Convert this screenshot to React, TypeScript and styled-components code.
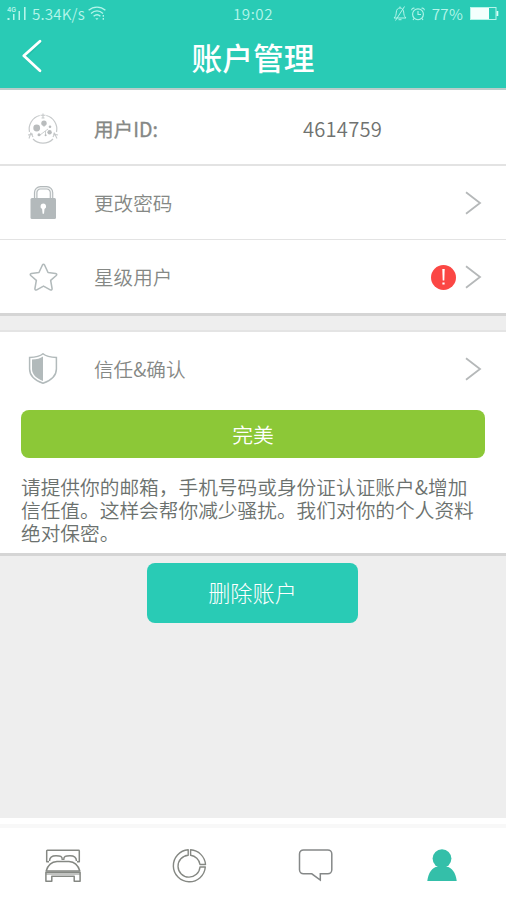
import React from 'react';
import styled, { createGlobalStyle } from 'styled-components';

const GlobalStyle = createGlobalStyle`
  * { box-sizing: border-box; }
  body {
    margin: 0;
    background: #eeeeee;
    font-family: "Noto Sans CJK SC", "Noto Sans", sans-serif;
  }
  svg { display: block; flex: none; }
`;

const Screen = styled.div`
  width: 506px;
  height: 900px;
  display: flex;
  flex-direction: column;
  overflow: hidden;
  background: #eeeeee;
`;

const Header = styled.header`
  height: 90px;
  flex: none;
  background: #29cbb5;
  border-bottom: 2px solid #b9cdca;
`;

const StatusBar = styled.div`
  height: 27px;
  display: grid;
  grid-template-columns: 1fr auto 1fr;
  align-items: center;
  padding: 0 7px;
  color: #b5f5ea;
  font-size: 15.2px;
  line-height: 24px;
  font-weight: 350;
`;

const StatusGroup = styled.div<{ $end?: boolean }>`
  display: flex;
  align-items: center;
  justify-content: ${(p) => (p.$end ? 'flex-end' : 'flex-start')};
`;

const StatusText = styled.span<{ $spacing: number; $left?: number; $right?: number }>`
  letter-spacing: ${(p) => p.$spacing}px;
  margin-left: ${(p) => p.$left ?? 0}px;
  margin-right: ${(p) => p.$right ?? 0}px;
  padding-bottom: 2px;
  white-space: nowrap;
`;

const TitleBar = styled.div`
  height: 61px;
  display: grid;
  grid-template-columns: 62px 1fr 62px;
  align-items: center;
`;

const BackButton = styled.button`
  border: 0;
  background: none;
  padding: 0 0 3px 20px;
  height: 61px;
  display: flex;
  align-items: center;
`;

const Title = styled.h1`
  margin: 0;
  text-align: center;
  color: #ffffff;
  font-size: 30.7px;
  line-height: 59px;
  padding-bottom: 2px;
  font-weight: 500;
`;

const Card = styled.section`
  flex: none;
  background: #ffffff;
  border-bottom: 3px solid #d5d5d5;
`;

const TrustCard = styled(Card)`
  height: 226px;
  margin-top: 14px;
  border-top: 2px solid #e4e4e4;
`;

const Row = styled.div<{ $height: number; $line?: number; $drop?: number }>`
  height: ${(p) => p.$height}px;
  display: flex;
  align-items: center;
  padding: ${(p) => p.$drop ?? 0}px 24px 0 27px;
  border-bottom: ${(p) => p.$line ?? 0}px solid #e3e3e3;
`;

const IconSlot = styled.div`
  width: 32px;
  margin-right: 35px;
  display: flex;
  justify-content: center;
`;

const Label = styled.span<{ $strong?: boolean }>`
  flex: 1;
  color: #858885;
  font-size: 19.6px;
  line-height: 28px;
  font-weight: ${(p) => (p.$strong ? 400 : 350)};
  -webkit-text-stroke: ${(p) => (p.$strong ? '0.3px #858885' : '0')};
`;

const UserId = styled.span`
  width: 179px;
  color: #6f7270;
  font-size: 20.2px;
  line-height: 28px;
  letter-spacing: 0.2px;
  font-weight: 350;
`;

const Alert = styled.span`
  width: 25px;
  height: 25px;
  border-radius: 50%;
  background: #fb4744;
  margin-right: 9px;
  display: flex;
  align-items: center;
  justify-content: center;
`;

const StatusButton = styled.button`
  display: block;
  width: 464px;
  height: 48px;
  margin: 4px 0 0 21px;
  padding: 0 0 1px;
  border: 0;
  border-radius: 8px;
  background: #8cc837;
  color: #ffffff;
  font: 350 20.8px/46px "Noto Sans CJK SC", sans-serif;
`;

const Notice = styled.p`
  margin: 17px 21px 0;
  color: #6b716e;
  font-size: 19.7px;
  line-height: 23px;
  font-weight: 350;
  white-space: nowrap;
`;

const Body = styled.main`
  flex: 1;
  display: flex;
  justify-content: center;
  align-items: flex-start;
  padding-top: 7px;
`;

const DeleteButton = styled.button`
  width: 211px;
  height: 60px;
  margin-right: 1px;
  padding: 0 0 2px;
  border: 0;
  border-radius: 8px;
  background: #29cbb5;
  color: #ffffff;
  font: 300 22.2px/58px "Noto Sans CJK SC", sans-serif;
`;

const TabBar = styled.nav`
  height: 82px;
  flex: none;
  display: grid;
  grid-template-columns: repeat(4, 1fr);
  border-top: 6px solid #ffffff;
  background: linear-gradient(#f8f8f8 4px, #ffffff 4px);
`;

const Tab = styled.button`
  border: 0;
  background: none;
  padding: 25px 1px 0 0;
  display: flex;
  justify-content: center;
  align-items: flex-start;
`;

const SignalIcon = () => (
  <svg width="20" height="16" viewBox="0 0 20 16" fill="#b5f5ea">
    <text x="0" y="5.8" fontSize="6.5" fontFamily="Inter, sans-serif" fontWeight="600">4G</text>
    <path d="M0.5 12h2v2h-2zM6 8h1.5v6H6zM11.5 5H13v9h-1.500zM17 1h1.600v13H17z" />
  </svg>
);

const WifiIcon = () => (
  <svg width="18" height="15" viewBox="0 0 18 15" fill="none" stroke="#b5f5ea" strokeWidth="1.3">
    <path d="M.6 4.300C5.500 0 12.500 0 17.400 4.300M3 7.400c3.600-3.200 8.400-3.200 12 0M5.600 10.300c2.200-1.900 4.800-1.900 6.800 0" />
    <path d="M7.300 12.300h3.200L8.900 14z" fill="#b5f5ea" stroke="none" />
    <path d="M15.300 9v1.800M15.300 12v1.800" />
  </svg>
);

const MuteIcon = () => (
  <svg width="14" height="15" viewBox="0 0 14 15" fill="none" stroke="#b5f5ea" strokeWidth="1">
    <path d="M1 12c2-2 2-3 2.300-6C3.500 3.500 5 2 7 2s3.500 1.500 3.700 4c.3 3 .3 4 2.300 6zM7 .5V2M5.500 13.700h3M11.500.5 2.500 14.500" />
  </svg>
);

const AlarmIcon = () => (
  <svg width="14" height="14" viewBox="0 0 14 14" fill="none" stroke="#b5f5ea" strokeWidth="1.100">
    <circle cx="7" cy="7.300" r="5.400" />
    <path d="M7 4v3.500h3M.7 3.200C.7 1.500 2 .8 3.500 1.200M13.300 3.200c0-1.700-1.300-2.400-2.800-2M3 11.500l-1 1.500M11 11.500l1 1.500" />
  </svg>
);

const BatteryIcon = () => (
  <svg width="29" height="13" viewBox="0 0 29 13">
    <rect x=".5" y=".5" width="25.500" height="12" fill="none" stroke="#b5f5ea" />
    <rect x="1" y="1" width="18" height="11" fill="#f4fffd" />
    <rect x="26.500" y="4" width="1.800" height="5" fill="#d8fff8" />
  </svg>
);

const BackIcon = () => (
  <svg width="24" height="36" viewBox="0 0 24 36" fill="none" strokeLinecap="round" strokeLinejoin="round">
    <path d="M20.500 4.500 5 19.500l15.500 14" stroke="#1eb49f" strokeWidth="2.500" opacity=".45" />
    <path d="M20 3.200 3.800 17.800 20 32.700" stroke="#ffffff" strokeWidth="2.800" />
  </svg>
);

const Chevron = () => (
  <svg width="17" height="24" viewBox="0 0 17 24" fill="none" stroke="#b5b8b9" strokeWidth="1.800">
    <path d="M1 1.300 15 12 1 22.700" />
  </svg>
);

const IdIcon = () => (
  <svg width="32" height="32" viewBox="0 0 32 32" fill="none" stroke="#c6c9ca">
    <path d="M12.700 2.500A14 14 0 0 0 2.500 19M19.300 2.500A14 14 0 0 1 29.500 19M6 26a14 14 0 0 0 20 0" strokeWidth="1.200" />
    <path d="M16 .5v4.500M13.500 2.200h5M14.500 5h3M1 22l5-1M2 25.500l2-6M4 20l2 4M31 22l-5-1M30 25.500l-3-6M26 24l2-4" strokeWidth="1.100" />
    <path d="M13 22l8-6M17 10v4M18.500 18v4.500" strokeWidth=".9" />
    <g fill="#b9bcbd" stroke="none">
      <circle cx="9.700" cy="15" r="3.400" />
      <circle cx="17" cy="10.200" r="2.700" />
      <circle cx="22.600" cy="19.300" r="2.200" />
      <circle cx="23" cy="13.800" r="1.300" />
      <circle cx="12" cy="21.800" r="1.500" />
      <circle cx="18.600" cy="22.300" r="1" />
    </g>
  </svg>
);

const LockIcon = () => (
  <svg width="27" height="34" viewBox="0 0 27 34">
    <path
      d="M5.700 14V6.500a4.700 4.700 0 0 1 4.700-4.700h6.400a4.700 4.700 0 0 1 4.700 4.700V14"
      fill="none" stroke="#b3b9bb" strokeWidth="3.600"
    />
    <path
      d="M5.700 13V6.500a4.700 4.700 0 0 1 4.700-4.700h6.400a4.700 4.700 0 0 1 4.700 4.700V13"
      fill="none" stroke="#f4f5f5" strokeWidth="1.300"
    />
    <rect x=".5" y="12" width="25.500" height="21" rx="1.500" fill="#b3b9bb" />
    <path d="M13.300 17.500a2.900 2.900 0 0 1 1.200 5.500l-.5 4.800h-1.400l-.5-4.800a2.900 2.900 0 0 1 1.200-5.500z" fill="#ffffff" />
  </svg>
);

const StarIcon = () => (
  <svg width="29" height="29" viewBox="0 0 30 30" fill="none" stroke="#b2babb" strokeWidth="1.600" strokeLinejoin="round">
    <path d="M13.800 2.300q1.200-2 2.400 0l3.500 7.500 7.800 1q2 .6.700 2.100L22.400 18l1.500 8.500q0 2-1.900 1.300L15 23.900l-7 3.900q-1.900.7-1.900-1.300L7.600 18l-5.800-5.100q-1.300-1.500.7-2.100l7.800-1z" />
  </svg>
);

const ShieldIcon = () => (
  <svg width="30" height="32" viewBox="0 0 30 32">
    <path
      d="M15 .7c3.500 3 7.500 3.500 13.400 3.700v11.500c0 7-5 11.300-13.400 14.300C6.600 27.200 1.600 22.900 1.600 15.900V4.400C7.500 4.200 11.500 3.700 15 .7z"
      fill="#ffffff" stroke="#b2babb" strokeWidth="1.500"
    />
    <path d="M15 3.500v24.500c-6.500-2.500-11-6.500-11-12V6.500c5-.3 8-.8 11-3z" fill="#b2babb" />
  </svg>
);

const AlertMark = () => (
  <svg width="5" height="16" viewBox="0 0 5 16" fill="#ffffff">
    <path d="M1.300 0h2.400l-.4 11.500H1.700z" />
    <rect x="1.400" y="13.500" width="2.200" height="2" />
  </svg>
);

const BedIcon = () => (
  <svg width="36" height="34" viewBox="0 0 36 34" fill="none" stroke="#858883" strokeWidth="1.500" strokeLinejoin="round">
    <path d="M4 12.800H1.700V2q0-.7.700-.7h31.200q.7 0 .7.700v10.800H32" />
    <path d="M4.500 12c.2-4 2.500-5.200 6.500-5.200 4.500 0 6.300.3 6.300 4.200M31.500 12c-.2-4-2.500-5.200-6.500-5.200-4.500 0-6.300.3-6.300 4.200" />
    <path d="M1.200 21.900C3 15.500 6 12.700 12 12.400h12c6 .3 9 3.300 10.800 9.500z" />
    <path d="M.9 23.300h34.200v9H29.200v-5H6.800v5H.9z" />
    <path d="M1 25h34" strokeWidth="1" />
  </svg>
);

const RingIcon = () => (
  <svg width="35" height="34" viewBox="0 0 35 34" fill="none" stroke="#858883" strokeWidth="1.400" strokeLinejoin="round">
    <path d="M16.200.8A16 16 0 1 0 33.300 18H28A11 11 0 1 1 16.200 6.200z" />
    <path d="M18.600.8A16 16 0 0 1 33.500 15.500H28A11 11 0 0 0 18.600 6.300z" />
  </svg>
);

const ChatIcon = () => (
  <svg width="35" height="33" viewBox="0 0 35 33" fill="none" stroke="#858888" strokeWidth="1.500">
    <path d="M5.500.9h24.300a4 4 0 0 1 4 4v15.900a4 4 0 0 1-4 4h-7.500v6.200l-8.500-6.200H5.500a4 4 0 0 1-4-4V4.900a4 4 0 0 1 4-4z" />
  </svg>
);

const PersonIcon = () => (
  <svg width="30" height="33" viewBox="0 0 30 33" fill="#34bfa9">
    <circle cx="15" cy="9.600" r="9.400" />
    <path d="M.3 31.900C1 24.200 5.500 17.700 10.500 17.700h9c5 0 9.500 6.500 10.200 14.200z" />
  </svg>
);

export default function App() {
  return (
    <>
      <GlobalStyle />
      <Screen>
        <Header>
          <StatusBar>
            <StatusGroup>
              <SignalIcon />
              <StatusText $spacing={0.15} $left={5} $right={3}>5.34K/s</StatusText>
              <WifiIcon />
            </StatusGroup>
            <StatusText $spacing={0.5}>19:02</StatusText>
            <StatusGroup $end>
              <MuteIcon />
              <StatusText $spacing={0} $left={4} />
              <AlarmIcon />
              <StatusText $spacing={0.2} $left={7} $right={7}>77%</StatusText>
              <BatteryIcon />
            </StatusGroup>
          </StatusBar>
          <TitleBar>
            <BackButton aria-label="返回"><BackIcon /></BackButton>
            <Title>账户管理</Title>
          </TitleBar>
        </Header>

        <Card>
          <Row $height={76} $line={2} $drop={3}>
            <IconSlot><IdIcon /></IconSlot>
            <Label $strong>用户ID:</Label>
            <UserId>4614759</UserId>
          </Row>
          <Row $height={74} $line={1}>
            <IconSlot><LockIcon /></IconSlot>
            <Label>更改密码</Label>
            <Chevron />
          </Row>
          <Row $height={73} $drop={1}>
            <IconSlot><StarIcon /></IconSlot>
            <Label>星级用户</Label>
            <Alert><AlertMark /></Alert>
            <Chevron />
          </Row>
        </Card>

        <TrustCard>
          <Row $height={74}>
            <IconSlot><ShieldIcon /></IconSlot>
            <Label>信任&amp;确认</Label>
            <Chevron />
          </Row>
          <StatusButton>完美</StatusButton>
          <Notice>
            请提供你的邮箱，手机号码或身份证认证账户&amp;增加<br />
            信任值。这样会帮你减少骚扰。我们对你的个人资料<br />
            绝对保密。
          </Notice>
        </TrustCard>

        <Body>
          <DeleteButton>删除账户</DeleteButton>
        </Body>

        <TabBar>
          <Tab><BedIcon /></Tab>
          <Tab><RingIcon /></Tab>
          <Tab><ChatIcon /></Tab>
          <Tab><PersonIcon /></Tab>
        </TabBar>
      </Screen>
    </>
  );
}
